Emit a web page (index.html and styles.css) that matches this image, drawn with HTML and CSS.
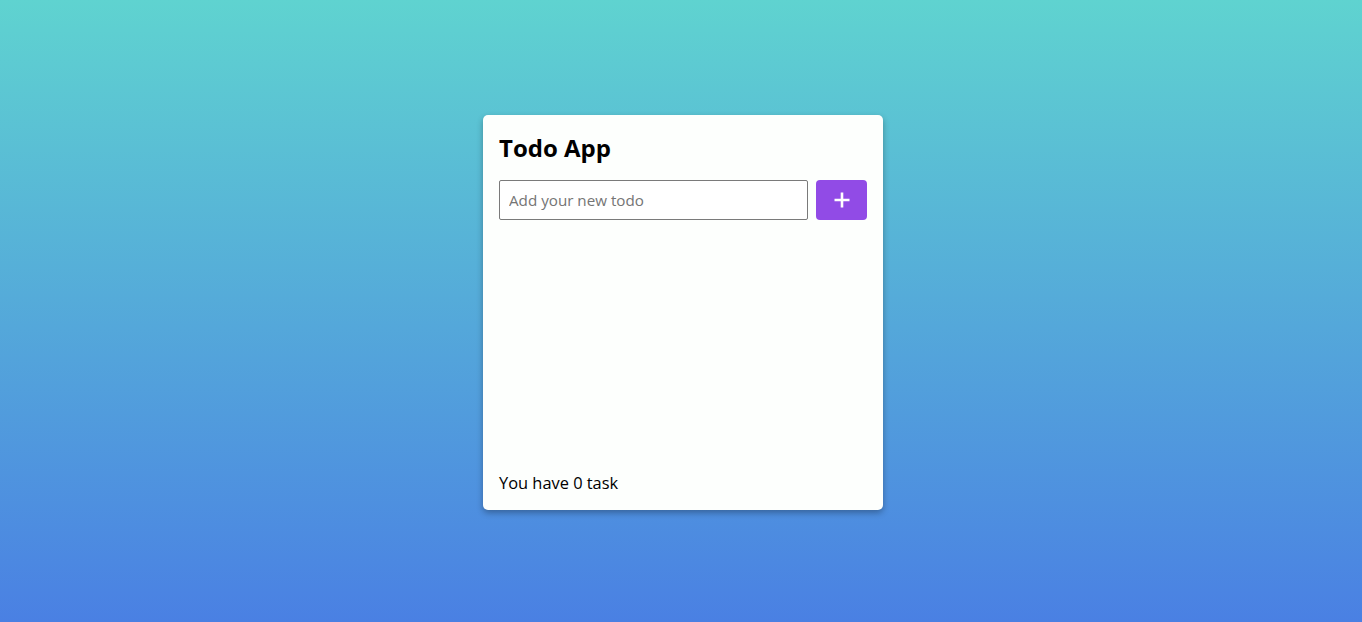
FILE: index.html
```html
<!DOCTYPE html>
<html lang="en">
<head>
<meta charset="utf-8">
<title>Todo App</title>
<link rel="stylesheet" href="styles.css">
</head>
<body>
<main class="page">
  <section class="card">
    <h1 class="title">Todo App</h1>
    <form class="add-row" onsubmit="return false;">
      <input class="todo-input" type="text" placeholder="Add your new todo">
      <button class="add-btn" type="button" aria-label="Add">
        <svg width="18" height="18" viewBox="0 0 18 18"><path d="M9 1.5v15M1.5 9h15" stroke="#fff" stroke-width="2.6"/></svg>
      </button>
    </form>
    <ul class="todo-list"></ul>
    <footer class="footer">You have 0 task</footer>
  </section>
</main>
</body>
</html>
```
FILE: styles.css
```css
* { box-sizing: border-box; }
html, body { margin: 0; height: 100%; }
body {
  background: linear-gradient(to bottom, #5fd3d0 0%, #4a80e3 100%);
  font-family: "Open Sans", "Noto Sans", sans-serif;
  color: #000;
}
.page {
  height: 100%;
  display: flex;
  align-items: center;
  justify-content: center;
  padding-left: 4px;
  padding-top: 3px;
}
.card {
  width: 400px;
  height: 395px;
  background: #fdfffd;
  border-radius: 5px;
  box-shadow: 0 3px 6px rgba(0, 0, 0, 0.3);
  padding: 16px;
  display: flex;
  flex-direction: column;
}
.title {
  margin: 0 0 16px;
  font-size: 24px;
  font-weight: 700;
  line-height: 33px;
}
.add-row {
  display: flex;
  gap: 8px;
  margin: 0;
}
.todo-input {
  flex: 1;
  height: 40px;
  border: 1px solid #7a7a7a;
  border-radius: 2px;
  padding: 0 9px;
  font-family: inherit;
  font-size: 15.2px;
  color: #222;
  background: #fff;
  outline: none;
}
.todo-input::placeholder { color: #757575; }
.add-btn {
  width: 51px;
  height: 40px;
  border: none;
  border-radius: 4px;
  background: #914be6;
  display: flex;
  align-items: center;
  justify-content: center;
  padding: 0;
  cursor: pointer;
}
.todo-list {
  flex: 1;
  list-style: none;
  margin: 0;
  padding: 0;
}
.footer {
  font-size: 16.4px;
  line-height: 22px;
  margin-bottom: 0;
}
```
